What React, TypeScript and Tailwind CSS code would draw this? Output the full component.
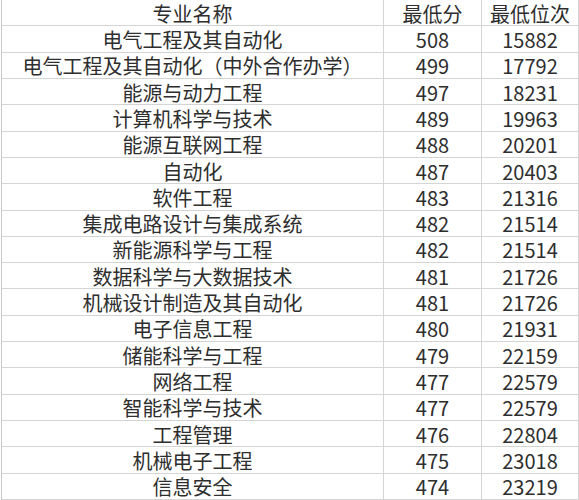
import React from 'react';

const rows: [string, string, string][] = [
    ['电气工程及其自动化', '508', '15882'],
    ['电气工程及其自动化（中外合作办学）', '499', '17792'],
    ['能源与动力工程', '497', '18231'],
    ['计算机科学与技术', '489', '19963'],
    ['能源互联网工程', '488', '20201'],
    ['自动化', '487', '20403'],
    ['软件工程', '483', '21316'],
    ['集成电路设计与集成系统', '482', '21514'],
    ['新能源科学与工程', '482', '21514'],
    ['数据科学与大数据技术', '481', '21726'],
    ['机械设计制造及其自动化', '481', '21726'],
    ['电子信息工程', '480', '21931'],
    ['储能科学与工程', '479', '22159'],
    ['网络工程', '477', '22579'],
    ['智能科学与技术', '477', '22579'],
    ['工程管理', '476', '22804'],
    ['机械电子工程', '475', '23018'],
    ['信息安全', '474', '23219'],
];

const Cell: React.FC<{ children: React.ReactNode }> = ({ children }) => (
    <div className="flex items-center justify-center border-r border-b border-[#d4d4d4] pt-[2px] leading-[20px] whitespace-nowrap">
        {children}
    </div>
);

export default function App() {
    return (
        <div className="h-[500px] w-[579px] overflow-hidden bg-white">
            <div
                className="ml-[1px] grid h-[500px] w-[578px] grid-cols-[382px_98px_97px] grid-rows-[repeat(19,1fr)] border-l border-[#c8c8c8] text-[20px] text-[#2e2e2e]"
                style={{ fontFamily: '"Noto Sans CJK SC", "Noto Sans", sans-serif' }}
            >
                <Cell>专业名称</Cell>
                <Cell>最低分</Cell>
                <Cell>最低位次</Cell>
                {rows.map(([name, score, rank]) => (
                    <React.Fragment key={name}>
                        <Cell>{name}</Cell>
                        <Cell>{score}</Cell>
                        <Cell>{rank}</Cell>
                    </React.Fragment>
                ))}
            </div>
        </div>
    );
}
